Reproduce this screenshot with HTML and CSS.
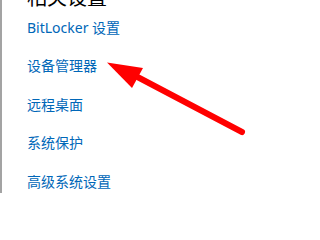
FILE: index.html
```html
<!DOCTYPE html>
<html lang="zh-CN">
<head>
<meta charset="utf-8">
<link rel="stylesheet" href="styles.css">
</head>
<body>
<div class="panel">
  <div class="heading">相关设置</div>
  <ul class="links">
    <li><a href="#">BitLocker 设置</a></li>
    <li><a href="#">设备管理器</a></li>
    <li><a href="#">远程桌面</a></li>
    <li><a href="#">系统保护</a></li>
    <li><a href="#">高级系统设置</a></li>
  </ul>
</div>
<svg class="arrow" width="293" height="207" viewBox="0 0 293 207">
  <line x1="242" y1="132" x2="128" y2="72" stroke="#ff0000" stroke-width="6" stroke-linecap="round"/>
  <polygon points="107,62.5 143,68 132,88" fill="#ff0000"/>
</svg>
</body>
</html>
```
FILE: styles.css
```css
html, body {
  margin: 0;
  padding: 0;
  background: #ffffff;
  overflow: hidden;
}
body {
  width: 293px;
  height: 207px;
  position: relative;
  font-family: "Noto Sans", "Noto Sans CJK SC", sans-serif;
}
.panel {
  display: flow-root;
  border-left: 2px solid #a3a3a3;
  height: 193px;
  padding-left: 25px;
  box-sizing: border-box;
}
.heading {
  margin-top: -16px;
  font-size: 20px;
  line-height: 26px;
  color: #000000;
  font-family: "Noto Sans CJK SC", sans-serif;
}
.links {
  list-style: none;
  margin: 7.5px 0 0 0;
  padding: 0;
  display: flex;
  flex-direction: column;
  gap: 18.5px;
}
.links li {
  font-size: 14px;
  line-height: 20px;
}
.links a {
  color: #0067b8;
  text-decoration: none;
}
.arrow {
  position: absolute;
  left: 0;
  top: 0;
}
```
